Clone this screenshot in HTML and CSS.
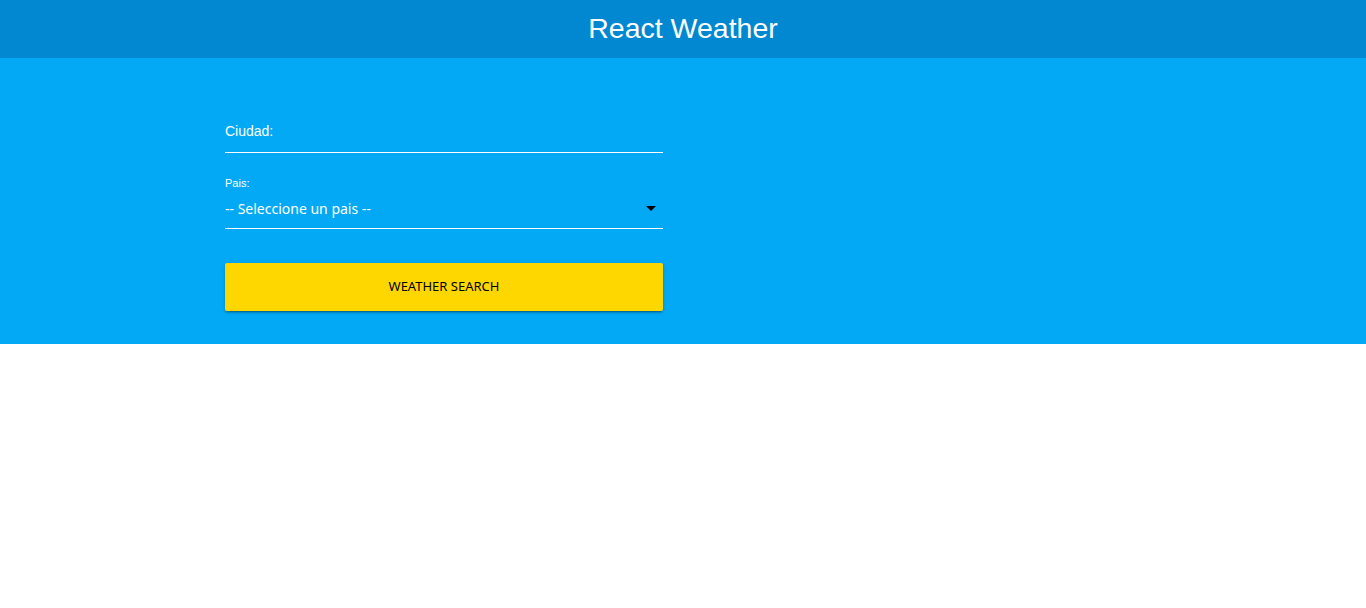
FILE: index.html
```html
<!DOCTYPE html>
<html>
<head>
<meta charset="utf-8">
<link rel="stylesheet" href="styles.css">
</head>
<body>
<header class="topbar"><h1 class="title">React Weather</h1></header>
<main class="hero">
  <form class="form">
    <div class="field">
      <div class="input-line"><span class="placeholder">Ciudad:</span></div>
    </div>
    <div class="field field-select">
      <label class="small-label">Pais:</label>
      <div class="select-line">
        <span class="select-text">-- Seleccione un pais --</span>
        <span class="caret"></span>
      </div>
    </div>
    <button type="button" class="btn">WEATHER SEARCH</button>
  </form>
</main>
</body>
</html>
```
FILE: styles.css
```css
* { box-sizing: border-box; }
html, body { margin: 0; padding: 0; background: #fff; }
body { font-family: "Liberation Sans", Arial, sans-serif; }
.topbar {
  height: 58px;
  background: #0288d1;
  display: flex;
  align-items: center;
  justify-content: center;
  padding-bottom: 2px;
}
.title {
  margin: 0;
  color: #fff;
  font-weight: normal;
  font-size: 28.5px;
  line-height: 1;
}
.hero {
  background: #03a9f4;
  height: 286px;
  padding: 0 0 0 225px;
}
.form {
  width: 438px;
  padding-top: 62px;
}
.input-line {
  height: 33px;
  border-bottom: 1px solid #fff;
  display: flex;
  align-items: flex-start;
  padding-top: 3px;
}
.placeholder {
  color: #fff;
  font-size: 14px;
  line-height: 16px;
}
.field-select { margin-top: 24px; }
.small-label {
  display: block;
  color: #fff;
  font-size: 11px;
  line-height: 12px;
}
.select-line {
  height: 40px;
  border-bottom: 1px solid #fff;
  display: flex;
  align-items: center;
  justify-content: space-between;
  padding-top: 0;
}
.select-text {
  color: #fff;
  font-family: "Noto Sans", "Open Sans", sans-serif;
  font-size: 14px;
}
.caret {
  width: 0;
  height: 0;
  border-left: 5px solid transparent;
  border-right: 5px solid transparent;
  border-top: 5px solid #000;
  margin-right: 7px;
  margin-top: 0;
}
.btn {
  display: block;
  margin-top: 34px;
  width: 438px;
  height: 48px;
  border: 0;
  border-radius: 2px;
  background: #ffd700;
  color: #000;
  font-family: "Noto Sans", "Open Sans", sans-serif;
  font-size: 13px;
  line-height: 1;
  box-shadow: 0 2px 2px 0 rgba(0,0,0,0.14), 0 1px 5px 0 rgba(0,0,0,0.12), 0 3px 1px -2px rgba(0,0,0,0.2);
  padding: 0 0 2px 0;
}
```
